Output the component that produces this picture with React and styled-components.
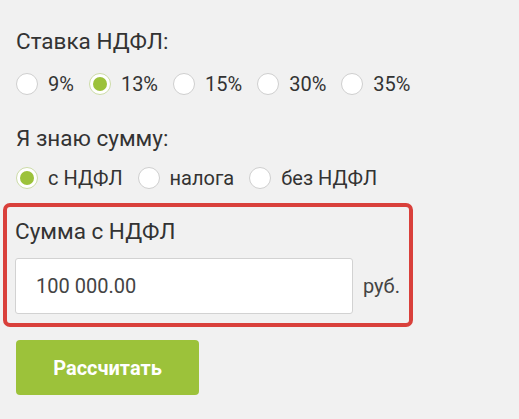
import React, { useState } from 'react';
import styled, { createGlobalStyle } from 'styled-components';

const GlobalStyle = createGlobalStyle`
  html, body {
    margin: 0;
    padding: 0;
    background: #f1f1f1;
  }
  body {
    font-family: Roboto, 'Liberation Sans', sans-serif;
    color: #333333;
  }
`;

const Form = styled.div`
  padding: 29px 16px 0 16px;
  display: flex;
  flex-direction: column;
  align-items: flex-start;
`;

const Heading = styled.div`
  font-size: 22.5px;
  line-height: 24px;
  color: #333;
`;

const RadioRow = styled.div`
  display: flex;
  align-items: center;
  gap: 15px;
  margin-top: ${props => props.$top}px;
  margin-bottom: ${props => props.$bottom}px;
`;

const Option = styled.label`
  display: flex;
  align-items: center;
  gap: 10px;
  font-size: 20px;
  line-height: 24px;
  color: #333;
  cursor: pointer;
`;

const Circle = styled.span`
  box-sizing: border-box;
  width: 22px;
  height: 22px;
  border-radius: 50%;
  background: #fff;
  border: 1px solid ${props => (props.$checked ? '#cddca8' : '#cfcfcf')};
  display: flex;
  align-items: center;
  justify-content: center;

  &::after {
    content: '';
    width: 14px;
    height: 14px;
    border-radius: 50%;
    background: #9cc23a;
    display: ${props => (props.$checked ? 'block' : 'none')};
  }
`;

const Highlight = styled.div`
  margin-left: -13px;
  width: 386px;
  border: 4px solid #d9403b;
  border-radius: 7px;
  padding: 12px 8px 9px 8px;
`;

const AmountRow = styled.div`
  display: flex;
  align-items: center;
  gap: 10px;
  margin-top: 15px;
`;

const AmountInput = styled.input`
  width: 338px;
  height: 56px;
  box-sizing: border-box;
  border: 1px solid #d2d2d2;
  border-radius: 3px;
  background: #fff;
  padding: 0 20px;
  font-family: Roboto, 'Liberation Sans', sans-serif;
  font-size: 20px;
  color: #444;
  outline: none;
`;

const Unit = styled.span`
  font-size: 20px;
  color: #444;
`;

const SubmitButton = styled.button`
  margin-top: 13px;
  width: 183px;
  height: 55px;
  border: none;
  border-radius: 4px;
  background: #9cc23a;
  color: #fff;
  font-family: Roboto, 'Liberation Sans', sans-serif;
  font-size: 20px;
  font-weight: 700;
  cursor: pointer;
`;

const rates = ['9%', '13%', '15%', '30%', '35%'];
const modes = ['с НДФЛ', 'налога', 'без НДФЛ'];

const RadioGroup = ({ items, value, onChange, top, bottom }) => (
  <RadioRow $top={top} $bottom={bottom}>
    {items.map(item => (
      <Option key={item} onClick={() => onChange(item)}>
        <Circle $checked={item === value} />
        {item}
      </Option>
    ))}
  </RadioRow>
);

export default function App() {
  const [rate, setRate] = useState('13%');
  const [mode, setMode] = useState('с НДФЛ');
  const [amount, setAmount] = useState('100 000.00');

  return (
    <>
      <GlobalStyle />
      <Form>
        <Heading>Ставка НДФЛ:</Heading>
        <RadioGroup items={rates} value={rate} onChange={setRate} top={19} bottom={30} />
        <Heading>Я знаю сумму:</Heading>
        <RadioGroup items={modes} value={mode} onChange={setMode} top={16} bottom={13} />
        <Highlight>
          <Heading>Сумма {mode}</Heading>
          <AmountRow>
            <AmountInput value={amount} onChange={e => setAmount(e.target.value)} />
            <Unit>руб.</Unit>
          </AmountRow>
        </Highlight>
        <SubmitButton>Рассчитать</SubmitButton>
      </Form>
    </>
  );
}
